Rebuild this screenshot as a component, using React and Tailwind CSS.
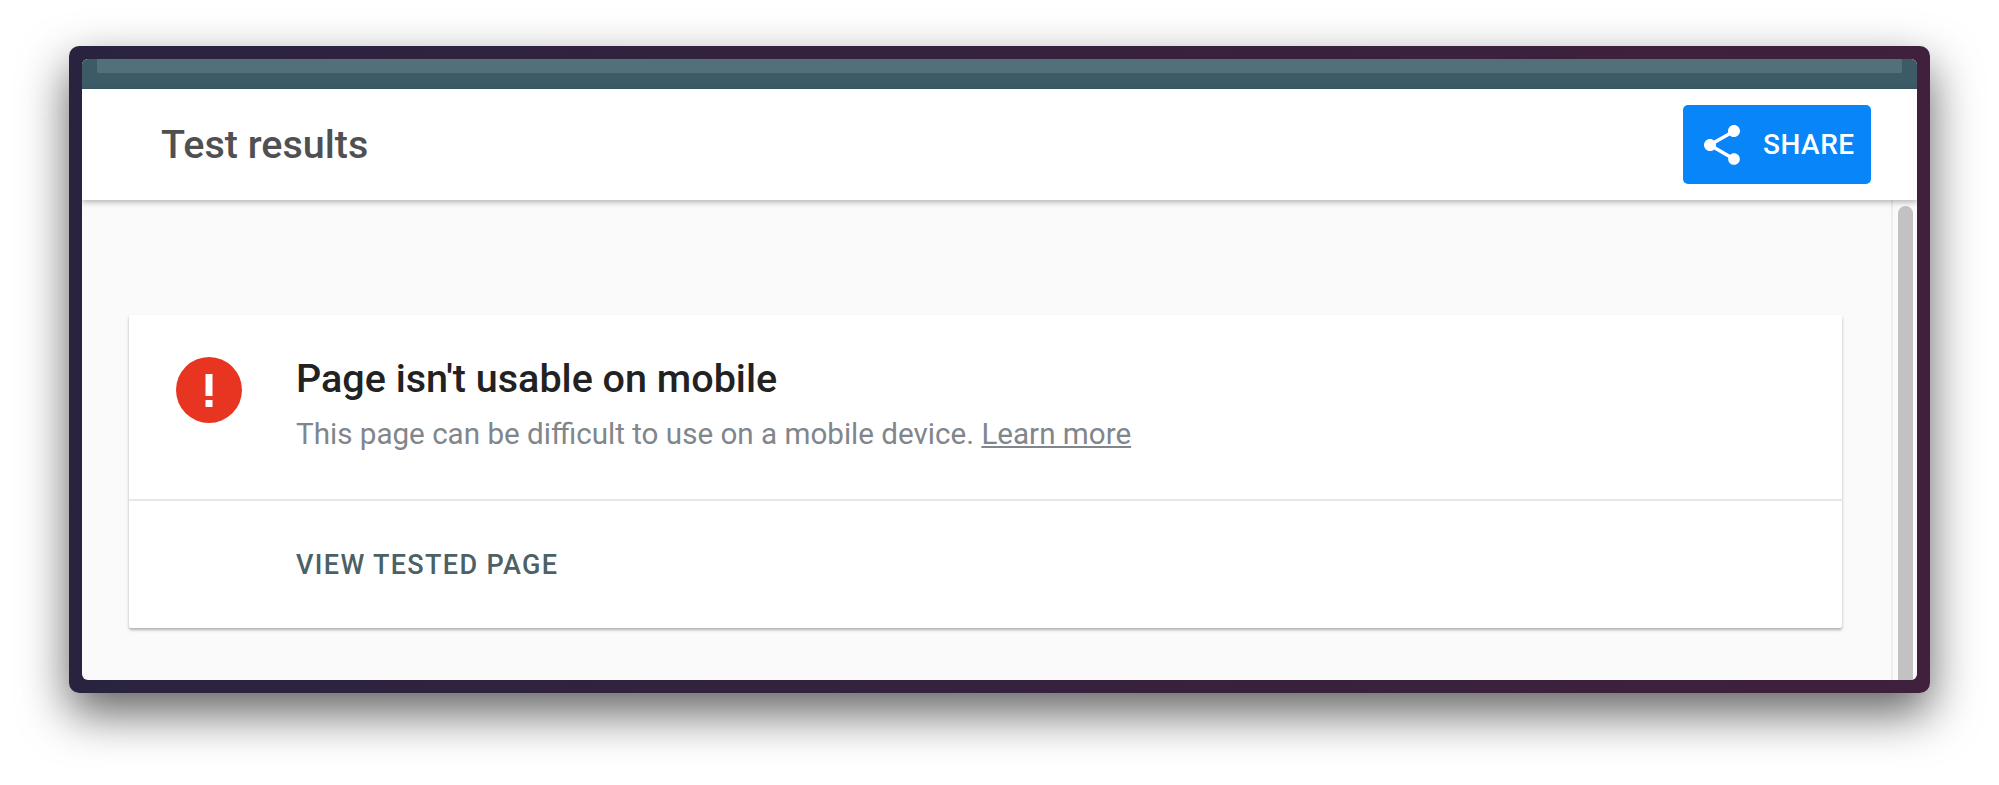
import React from 'react';

const ShareIcon = () => (
  <svg viewBox="0 0 24 24" className="w-[48px] h-[48px] fill-white">
    <path d="M18 16.08c-.76 0-1.44.3-1.96.77L8.91 12.7c.05-.23.09-.46.09-.7s-.04-.47-.09-.7l7.05-4.11c.54.5 1.25.81 2.04.81 1.66 0 3-1.34 3-3s-1.34-3-3-3-3 1.34-3 3c0 .24.04.47.09.7L8.04 9.81C7.5 9.31 6.79 9 6 9c-1.66 0-3 1.34-3 3s1.34 3 3 3c.79 0 1.5-.31 2.04-.81l7.12 4.16c-.05.21-.08.43-.08.65 0 1.61 1.31 2.92 2.92 2.92s2.92-1.31 2.92-2.92-1.31-2.92-2.92-2.92z" />
  </svg>
);

const ErrorIcon = () => (
  <svg viewBox="0 0 66 66" className="w-[66px] h-[66px] shrink-0">
    <circle cx="33" cy="33" r="33" fill="#e73522" />
    <rect x="29.5" y="17" width="7" height="22" fill="#fff" />
    <rect x="29.5" y="43" width="7" height="7" fill="#fff" />
  </svg>
);

export default function App() {
  return (
    <div className="w-[1999px] h-[785px] bg-white pt-[46px] pl-[69px] font-['Roboto',sans-serif] overflow-hidden">
      <div className="w-[1861px] h-[647px] p-[13px] rounded-[10px] bg-gradient-to-r from-[#2a2340] to-[#40203c] shadow-[0_20px_48px_rgba(0,0,0,0.62)]">
        <div className="h-full rounded-[6px] overflow-hidden flex flex-col bg-[#fafafa]">
          {/* teal strip on top */}
          <div className="h-[30px] shrink-0 bg-[#3d5b66]">
            <div className="h-[14px] mx-[15px] bg-[#536f79] rounded-b-[2px]" />
          </div>

          <div className="relative z-10 h-[111px] shrink-0 bg-white flex items-center justify-between pl-[79px] pr-[46px] shadow-[0_2px_6px_rgba(0,0,0,0.3)]">
            <h1 className="text-[39.5px] text-[#505050] font-medium">Test results</h1>
            <button className="w-[188px] h-[79px] rounded-[5px] bg-[#0785f9] flex items-center pl-[15px] gap-[17px] text-white text-[28px] font-medium tracking-[0.5px]">
              <ShareIcon />
              SHARE
            </button>
          </div>

          <div className="flex-1 flex min-h-0">
            <div className="flex-1 pt-[115px] pl-[47px] pr-[49px]">
              <div className="h-[313px] bg-white rounded-[2px] shadow-[0_2px_3px_rgba(0,0,0,0.3)] flex flex-col">
                <div className="h-[186px] flex pl-[47px] pt-[42px] gap-[54px] border-b-2 border-[#e8e8e8]">
                  <ErrorIcon />
                  <div className="flex flex-col">
                    <h2 className="text-[39.5px] leading-[44px] font-medium text-[#222222]">Page isn't usable on mobile</h2>
                    <p className="mt-[13px] text-[29.6px] leading-[40px] text-[#80868b]">
                      This page can be difficult to use on a mobile device. <span className="underline">Learn more</span>
                    </p>
                  </div>
                </div>
                <div className="flex-1 flex items-center pl-[167px] pt-[2px]">
                  <span className="text-[27px] font-medium tracking-[1.35px] text-[#4b6166]">VIEW TESTED PAGE</span>
                </div>
              </div>
            </div>
            {/* scrollbar */}
            <div className="w-[26px] shrink-0 border-l-2 border-[#ececec] pt-[6px] pl-[5px] pr-[4px]">
              <div className="h-full rounded-t-[8px] bg-[#c2c2c2]" />
            </div>
          </div>
        </div>
      </div>
    </div>
  );
}
